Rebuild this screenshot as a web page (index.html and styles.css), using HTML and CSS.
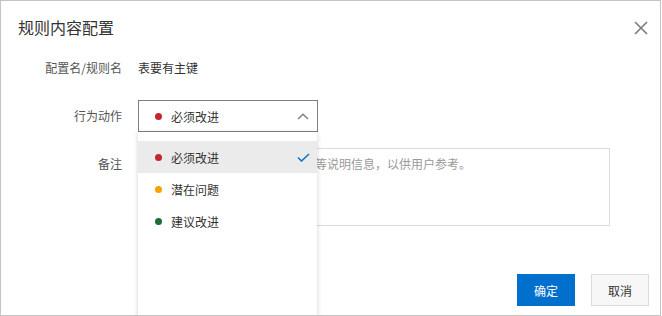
FILE: index.html
```html
<!DOCTYPE html>
<html lang="zh-CN">
<head>
    <meta charset="UTF-8">
    <meta name="viewport" content="width=device-width, initial-scale=1.0">
    <title>规则内容配置</title>
    <link rel="stylesheet" href="styles.css">
</head>
<body>
    <div class="dialog">
        <!-- Header -->
        <div class="dialog-header">
            <h2>规则内容配置</h2>
            <span class="close-btn">
                <svg width="14" height="14" viewBox="0 0 14 14">
                    <path d="M1 1 L13 13 M13 1 L1 13" stroke="#7a7a7a" stroke-width="1.6" fill="none"/>
                </svg>
            </span>
        </div>

        <!-- Form -->
        <div class="form">
            <div class="form-row">
                <label class="form-label">配置名/规则名</label>
                <div class="form-value">表要有主键</div>
            </div>
            <div class="form-row">
                <label class="form-label">行为动作</label>
                <div class="select-wrap">
                    <div class="select">
                        <span class="dot dot-red"></span>
                        <span class="select-text">必须改进</span>
                        <svg class="arrow" width="12" height="7" viewBox="0 0 12 7">
                            <path d="M1 6 L6 1.2 L11 6" stroke="#808080" stroke-width="1.5" fill="none"/>
                        </svg>
                    </div>
                    <ul class="dropdown">
                        <li class="option selected">
                            <span class="dot dot-red"></span>
                            <span class="option-text">必须改进</span>
                            <svg class="check" width="13" height="9" viewBox="0 0 13 9">
                                <path d="M1 4.5 L4.5 8 L12 1" stroke="#0a75d0" stroke-width="1.6" fill="none"/>
                            </svg>
                        </li>
                        <li class="option">
                            <span class="dot dot-orange"></span>
                            <span class="option-text">潜在问题</span>
                        </li>
                        <li class="option">
                            <span class="dot dot-green"></span>
                            <span class="option-text">建议改进</span>
                        </li>
                    </ul>
                </div>
            </div>
            <div class="form-row">
                <label class="form-label">备注</label>
                <textarea class="remark" placeholder="请输入规则详细描述及修改记录等说明信息，以供用户参考。"></textarea>
            </div>
        </div>

        <!-- Footer -->
        <div class="dialog-footer">
            <button class="btn btn-primary">确定</button>
            <button class="btn btn-normal">取消</button>
        </div>
    </div>
</body>
</html>
```

FILE: styles.css
```css
/* General styling */
* {
    margin: 0;
    padding: 0;
    box-sizing: border-box;
}
body {
    font-family: "Noto Sans CJK SC", "Liberation Sans", sans-serif;
    font-size: 12px;
    color: #333;
    background: #fff;
}
.dialog {
    width: 661px;
    height: 316px;
    border: 1px solid #c4c4c4;
    background: #fff;
    display: flex;
    flex-direction: column;
    overflow: hidden;
}
.dialog-header {
    display: flex;
    justify-content: space-between;
    align-items: center;
    padding: 9px 12px 0 17px;
    height: 42px;
}
.dialog-header h2 {
    font-size: 16px;
    font-weight: normal;
    line-height: 24px;
    color: #333;
}
.close-btn {
    display: flex;
    margin-top: 3px;
}
.form {
    padding-top: 9px;
    display: flex;
    flex-direction: column;
    gap: 16px;
}
.form-row {
    display: flex;
    gap: 16px;
}
.form-label {
    width: 121px;
    text-align: right;
    line-height: 31px;
    color: #555;
}
.form-value {
    line-height: 32px;
    color: #333;
}
/* Select */
.select-wrap {
    position: relative;
}
.select {
    width: 180px;
    height: 32px;
    border: 1px solid #7f7f7f;
    display: flex;
    align-items: center;
    padding: 0 8px 0 16px;
}
.select-text {
    flex: 1;
}
.dot {
    width: 7px;
    height: 7px;
    border-radius: 50%;
    margin-right: 9px;
    flex-shrink: 0;
}
.dot-red {
    background: #c2272d;
}
.dot-orange {
    background: #f5a300;
}
.dot-green {
    background: #1b6e35;
}
.dropdown {
    position: absolute;
    top: 32px;
    left: 0;
    width: 179px;
    height: 200px;
    list-style: none;
    background: #fff;
    padding-top: 9px;
    box-shadow: 0 1px 5px rgba(0, 0, 0, 0.18);
    z-index: 10;
}
.option {
    height: 32px;
    display: flex;
    align-items: center;
    padding: 0 7px 0 17px;
}
.option.selected {
    background: #ebebeb;
}
.option-text {
    flex: 1;
}
/* Textarea */
.remark {
    width: 472px;
    height: 78px;
    border: 1px solid #dcdcdc;
    padding: 5px 8px;
    font-family: inherit;
    font-size: 12px;
    line-height: 20px;
    color: #333;
    resize: none;
    outline: none;
}
.remark::placeholder {
    color: #999;
}
/* Footer */
.dialog-footer {
    margin-top: auto;
    display: flex;
    justify-content: flex-end;
    gap: 16px;
    padding: 0 11px 9px 0;
}
.btn {
    width: 58px;
    height: 32px;
    font-family: inherit;
    font-size: 12px;
    cursor: pointer;
}
.btn-primary {
    background: #0070cc;
    color: #fff;
    border: none;
}
.btn-normal {
    background: #f7f7f7;
    color: #333;
    border: 1px solid #dcdcdc;
}
```
